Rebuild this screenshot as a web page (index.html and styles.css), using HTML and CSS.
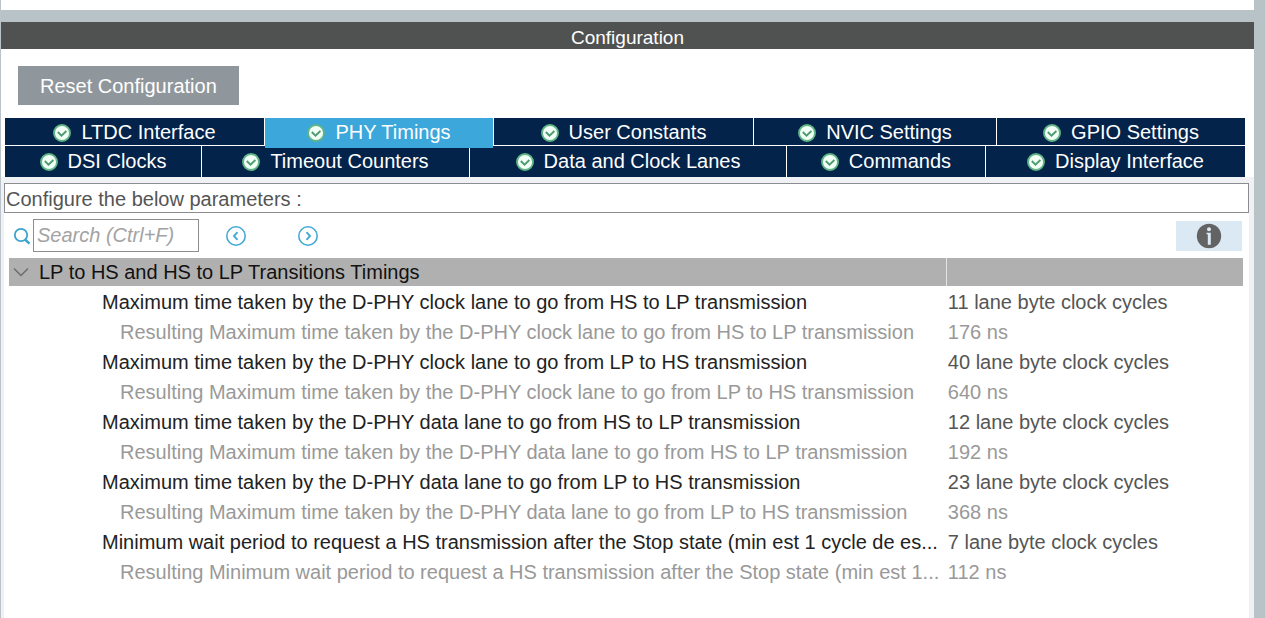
FILE: index.html
```html
<!DOCTYPE html>
<html lang="en">
<head>
  <meta charset="UTF-8">
  <title>Configuration</title>
  <link rel="stylesheet" href="styles.css">
</head>
<body>
  <svg class="defs" width="0" height="0" aria-hidden="true">
    <symbol id="check" viewBox="0 0 18 18">
      <circle cx="9" cy="9" r="8" fill="#f2fff6" stroke="#5fb585" stroke-width="1.9"/>
      <path d="M4.800 8l3.700 3.600 4.900-4.600" fill="none" stroke="#4f9a70" stroke-width="1.9"/>
    </symbol>
  </svg>

  <main class="window">
    <div class="splitter"></div>
    <h1 class="title">Configuration</h1>

    <div class="actions">
      <button class="reset" type="button">Reset Configuration</button>
    </div>

    <nav class="tabs">
      <div class="tab-row tab-row-top">
        <button class="tab ltdc" type="button"><svg class="check"><use href="#check"/></svg>LTDC Interface</button>
        <button class="tab phy active" type="button"><svg class="check"><use href="#check"/></svg>PHY Timings</button>
        <button class="tab user" type="button"><svg class="check"><use href="#check"/></svg>User Constants</button>
        <button class="tab nvic" type="button"><svg class="check"><use href="#check"/></svg>NVIC Settings</button>
        <button class="tab gpio" type="button"><svg class="check"><use href="#check"/></svg>GPIO Settings</button>
      </div>
      <div class="tab-row">
        <button class="tab dsi" type="button"><svg class="check"><use href="#check"/></svg>DSI Clocks</button>
        <button class="tab timeout" type="button"><svg class="check"><use href="#check"/></svg>Timeout Counters</button>
        <button class="tab lanes" type="button"><svg class="check"><use href="#check"/></svg>Data and Clock Lanes</button>
        <button class="tab commands" type="button"><svg class="check"><use href="#check"/></svg>Commands</button>
        <button class="tab display" type="button"><svg class="check"><use href="#check"/></svg>Display Interface</button>
      </div>
    </nav>

    <section class="panel">
      <p class="hint">Configure the below parameters :</p>

      <div class="content">
        <div class="toolbar">
          <label class="search-label" for="search" aria-label="Search">
            <svg width="18" height="18" viewBox="0 0 18 18" fill="none" stroke="#3ba3d0">
              <circle cx="8" cy="8" r="6.2" stroke-width="1.8"/>
              <path d="M12 12.5l4.5 4.2" stroke-width="2.4"/>
            </svg>
          </label>
          <input class="search" id="search" type="text" placeholder="Search (Ctrl+F)">
          <button class="step" type="button" aria-label="Previous">
            <svg width="22" height="22" viewBox="0 0 22 22" fill="none" stroke="#45aad6">
              <circle cx="11" cy="11" r="9.2" stroke-width="1.6"/>
              <path d="M12.5 7.2L9 11l3.5 3.8" stroke-width="1.9"/>
            </svg>
          </button>
          <button class="step" type="button" aria-label="Next">
            <svg width="22" height="22" viewBox="0 0 22 22" fill="none" stroke="#45aad6">
              <circle cx="11" cy="11" r="9.2" stroke-width="1.6"/>
              <path d="M9.5 7.2L13 11l-3.5 3.8" stroke-width="1.9"/>
            </svg>
          </button>
          <button class="info" type="button" aria-label="Information">
            <svg width="26" height="26" viewBox="0 0 26 26">
              <circle cx="13" cy="13" r="12.2" fill="#636363"/>
              <circle cx="13" cy="6.3" r="2" fill="#dbe9f5"/>
              <path d="M10.5 9.800h4.300v12h-3v-10.500h-1.300z" fill="#dbe9f5"/>
            </svg>
          </button>
        </div>

        <table class="params">
          <colgroup>
            <col class="col-name">
            <col class="col-value">
          </colgroup>
          <thead>
            <tr>
              <th scope="colgroup">
                <span class="group">
                  <svg width="16" height="10" viewBox="0 0 16 10" fill="none" stroke="#6c6c6c" stroke-width="1.5"><path d="M1 1.500l7 7 7-7"/></svg>
                  LP to HS and HS to LP Transitions Timings
                </span>
              </th>
              <td></td>
            </tr>
          </thead>
          <tbody>
            <tr><td>Maximum time taken by the D-PHY clock lane to go from HS to LP transmission</td><td>11 lane byte clock cycles</td></tr>
            <tr class="result"><td>Resulting Maximum time taken by the D-PHY clock lane to go from HS to LP transmission</td><td>176 ns</td></tr>
            <tr><td>Maximum time taken by the D-PHY clock lane to go from LP to HS transmission</td><td>40 lane byte clock cycles</td></tr>
            <tr class="result"><td>Resulting Maximum time taken by the D-PHY clock lane to go from LP to HS transmission</td><td>640 ns</td></tr>
            <tr><td>Maximum time taken by the D-PHY data lane to go from HS to LP transmission</td><td>12 lane byte clock cycles</td></tr>
            <tr class="result"><td>Resulting Maximum time taken by the D-PHY data lane to go from HS to LP transmission</td><td>192 ns</td></tr>
            <tr><td>Maximum time taken by the D-PHY data lane to go from LP to HS transmission</td><td>23 lane byte clock cycles</td></tr>
            <tr class="result"><td>Resulting Maximum time taken by the D-PHY data lane to go from LP to HS transmission</td><td>368 ns</td></tr>
            <tr><td>Minimum wait period to request a HS transmission after the Stop state (min est 1 cycle de es...</td><td>7 lane byte clock cycles</td></tr>
            <tr class="result"><td>Resulting Minimum wait period to request a HS transmission after the Stop state (min est 1...</td><td>112 ns</td></tr>
          </tbody>
        </table>
      </div>
    </section>
  </main>
</body>
</html>
```
FILE: styles.css
```css
* { box-sizing: border-box; }
body {
  margin: 0;
  background: #fff;
  color: #222;
  font-family: "Liberation Sans", Arial, sans-serif;
  font-size: 20px;
}
button, input { font: inherit; border: 0; border-radius: 0; }
button { padding: 0; cursor: pointer; }
.defs { position: absolute; }

.window {
  display: flex;
  flex-direction: column;
  min-height: 100vh;
  padding-top: 10px;
  border-left: 1px solid #b9c3c9;
  border-right: 11px solid #b8c3c8;
}
.splitter { height: 12px; background: #b8c3c8; }
.title {
  margin: 0;
  background: #505251;
  color: #fff;
  font-size: 19px;
  font-weight: normal;
  line-height: 27px;
  padding-top: 2px;
  height: 27px;
  text-align: center;
}
.actions { padding: 17px 17px 13px; display: flex; }
.reset {
  background: #8f979d;
  color: #fff;
  padding: 1px 22px 0;
  line-height: 38px;
}

/* tabs */
.tabs { padding: 0 9px 0 4px; }
.tab-row { display: flex; gap: 1px; }
.tab-row-top { margin-bottom: 1px; }
.tab {
  display: flex;
  align-items: center;
  justify-content: center;
  gap: 10px;
  height: 31px;
  background: #03234b;
  color: #fff;
  white-space: nowrap;
}
.tab-row-top .tab { height: 27px; padding-top: 2px; }
.tab-row .active {
  margin-bottom: -3px;
  border-bottom: 3px solid #3ba7db;
  background: #3ba7db;
  z-index: 1;
}
.tab-row-top .active { height: 30px; }
.check { width: 18px; height: 18px; }
.ltdc, .user { flex: 259 1 0; }
.phy { flex: 228 1 0; }
.nvic { flex: 242 1 0; }
.gpio { flex: 248 1 0; }
.dsi { flex: 196 1 0; }
.timeout { flex: 267 1 0; }
.lanes { flex: 316 1 0; }
.commands { flex: 198 1 0; }
.display { flex: 259 1 0; }

/* parameter panel */
.panel {
  flex: 1;
  display: flex;
  flex-direction: column;
  background: #eff1f5;
  padding: 6px 5px 0 3px;
}
.hint {
  margin: 0;
  padding: 2px 1px 0;
  height: 30px;
  line-height: 27px;
  background: #fff;
  border: 1px solid #8b8d91;
  color: #555;
}
.content { flex: 1; background: #fff; padding: 0 6px 0 5px; }
.toolbar { display: flex; align-items: center; height: 45px; }
.search-label { display: flex; width: 24px; padding-left: 4px; }
.search {
  width: 166px;
  height: 33px;
  padding: 0 3px;
  border: 1px solid #8b8d91;
  color: #333;
}
.search::placeholder { color: #a3a3a3; font-style: italic; opacity: 1; }
.step { display: flex; background: none; margin-left: 26px; }
.step + .step { margin-left: 50px; }
.info {
  display: flex;
  align-items: center;
  justify-content: center;
  width: 66px;
  height: 30px;
  margin: 0 1px 0 auto;
  background: #dbe9f5;
}

.params {
  width: 100%;
  table-layout: fixed;
  border-collapse: collapse;
  white-space: nowrap;
}
.col-name { width: 76%; }
.params th, .params td { padding: 0; text-align: left; }
.params thead th, .params thead td { height: 28px; line-height: 28px; background: #b0b0b0; font-weight: normal; color: #111; }
.params thead td { border-left: 1px solid #e4e4e4; }
.group { display: flex; align-items: center; gap: 10px; padding-left: 4px; }
.params tbody td { height: 30px; padding-top: 3px; line-height: 27px; }
.params tbody td:first-child { padding-left: 93px; }
.params tbody td:last-child { padding-left: 1px; color: #555; }
.params .result td:first-child { padding-left: 111px; }
.params .result td, .params .result td:last-child { color: #999; }
```
